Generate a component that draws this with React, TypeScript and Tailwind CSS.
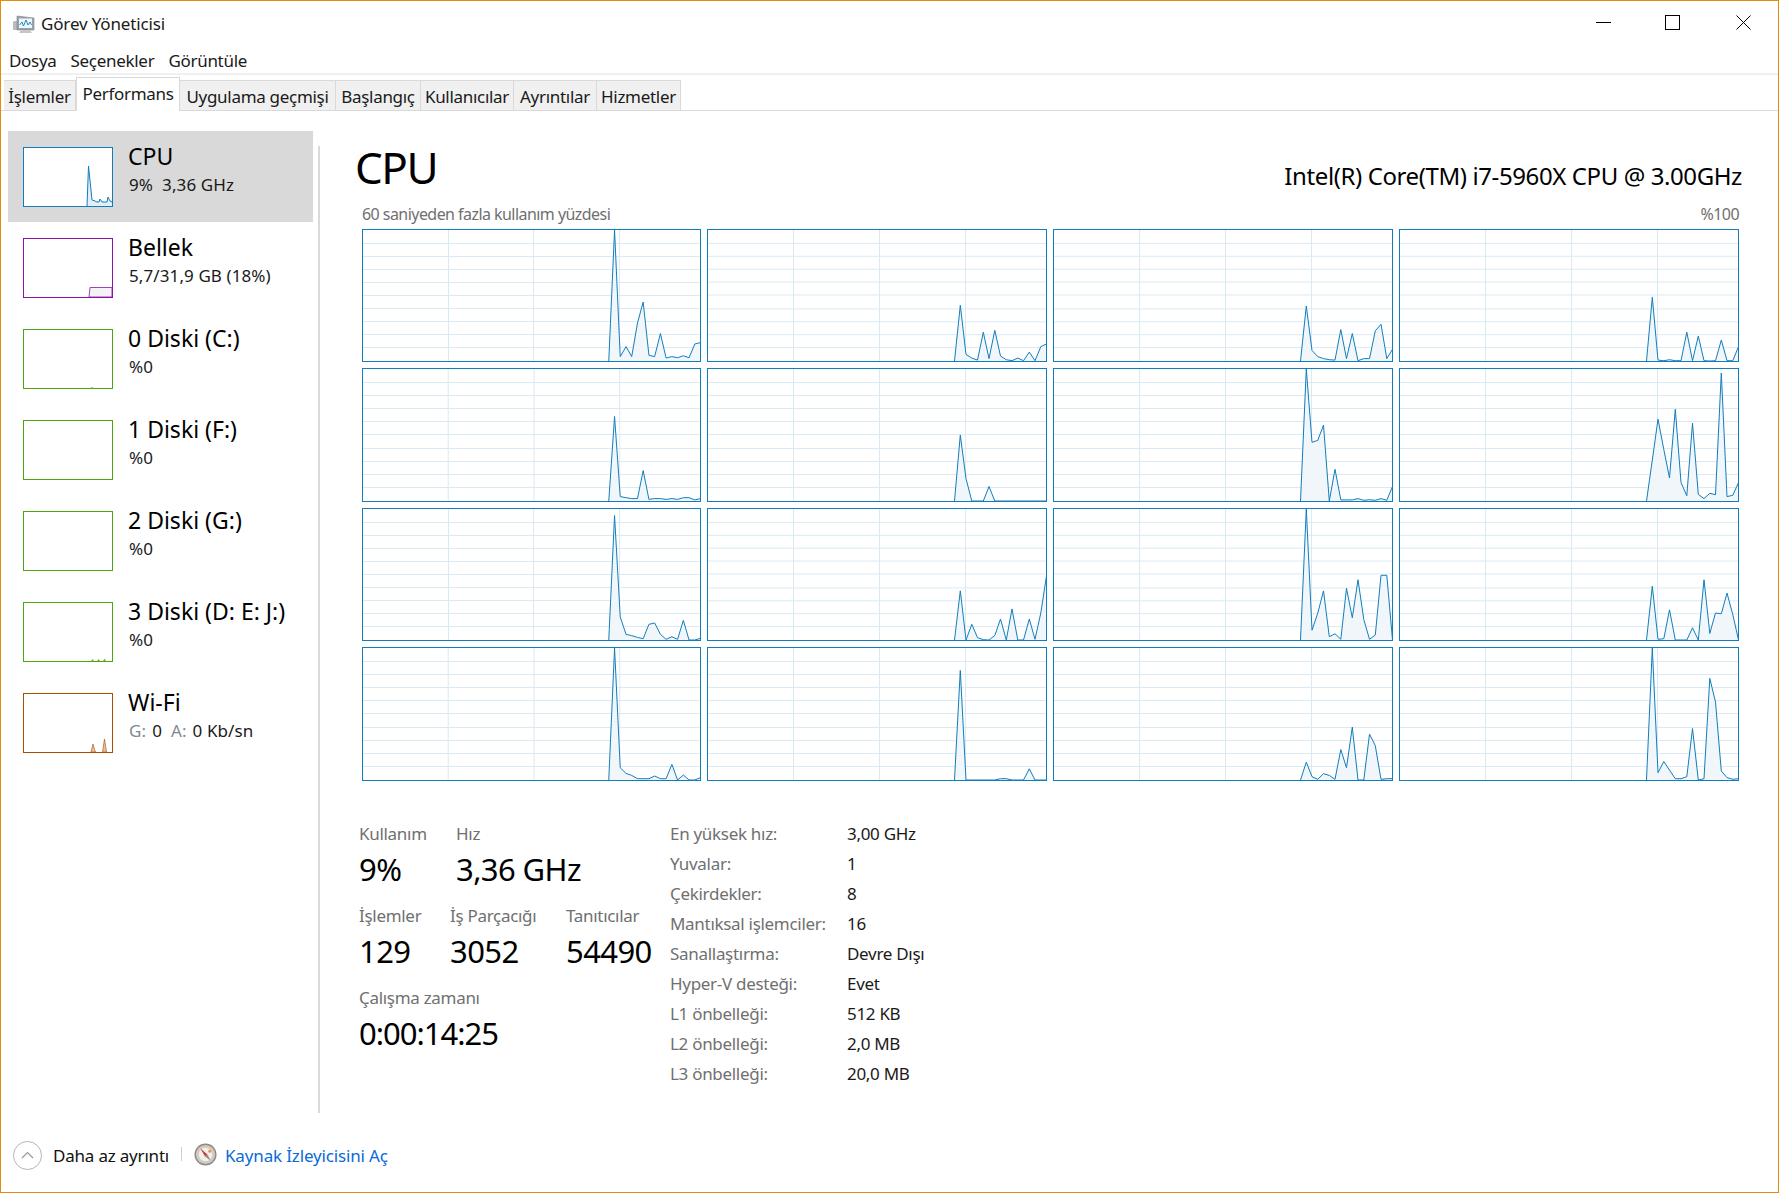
const series = [
  [0, 100, 3.3, 11, 3.3, 29, 45, 4.3, 3.3, 21, 2.3, 3.3, 2.5, 4, 2.5, 13, 14],
  [0, 42.5, 5, 2.3, 0.7, 22, 1.8, 23.4, 3.8, 1, 0.2, 2.3, 0.2, 6.8, 0.2, 11, 13],
  [0, 42, 8, 3.3, 1.8, 1, 0.7, 24, 1.8, 21, 0.2, 1.8, 1.8, 23, 28, 1.8, 9],
  [0, 48.6, 0.7, 0.2, 1, 0.2, 0.2, 22, 0.2, 19, 0.2, 0, 0.2, 16, 0.2, 0.2, 11],
  [0, 64, 3.3, 2.5, 1.8, 1.8, 23, 1.2, 1.8, 1.8, 1.2, 1.8, 1.2, 2.5, 2.5, 0.8, 1.8],
  [0, 50, 17, 0, 0, 0, 11, 0, 0, 0, 0, 0, 0, 0, 0, 0, 0],
  [0, 100, 44.5, 46, 57.5, 0, 24, 0.8, 0.8, 0.8, 1.8, 0.5, 1, 0.5, 1.8, 0.5, 11],
  [0, 31, 62, 39, 17.5, 69.5, 14, 4, 59, 5, 1.8, 5.8, 4.8, 97, 3.3, 4.3, 14],
  [0, 95, 17.6, 4.3, 3.3, 2, 1, 12, 13, 4.3, 0.5, 2.5, 0.5, 15, 0, 0, 1.3],
  [0, 37.5, 0, 12, 1.8, 0.2, 0, 3.5, 16, 0, 23.7, 0, 0, 16, 0.5, 20.6, 49],
  [0, 100, 7.5, 20.6, 37.5, 2.5, 4.8, 0.5, 39.5, 17, 46, 15.6, 0.5, 3.8, 49.4, 49.4, 0],
  [0, 41, 0.5, 1, 23, 0, 0, 0, 9.3, 0, 46, 5, 20.6, 20, 35.8, 19.4, 0],
  [0, 100, 9.3, 5, 3.5, 1, 1, 1, 3, 1, 1, 11.8, 0, 3.8, 0, 0, 1.8],
  [0, 83, 0, 0, 0, 0, 0, 0, 1, 1, 0, 0, 0, 8.5, 0, 0, 0],
  [0, 13.5, 2.5, 0.5, 4.8, 3.5, 0.5, 23, 9.3, 40, 0, 0, 34.8, 26, 0.5, 1, 1],
  [0, 100, 5.5, 14, 7.5, 1, 1, 2.5, 39, 0, 1, 77, 59, 6.8, 1.8, 0.5, 1],
];

const hLines = [13, 26, 39, 52, 65, 79, 92, 105, 118];
const vLines = [85.5, 171.5, 257.5];

function CoreChart({ values }: { values: number[] }) {
  const pts = values
    .map((v, i) => `${(338.5 - (16 - i) * 5.75).toFixed(1)},${(132 - v * 1.32).toFixed(1)}`)
    .join(" ");
  return (
    <div className="border border-[#117dbb] bg-white min-w-0 min-h-0">
      <svg viewBox="0 0 338 132" preserveAspectRatio="none" className="block w-full h-full">
        {hLines.map((y) => (
          <line key={y} x1="0" x2="338" y1={y + 0.5} y2={y + 0.5} stroke="#d9eaf4" shapeRendering="crispEdges" />
        ))}
        {vLines.map((x) => (
          <line key={x} y1="0" y2="132" x1={x} x2={x} stroke="#d9eaf4" shapeRendering="crispEdges" />
        ))}
        <polygon points={`${pts} 338.5,132`} fill="#f1f6fa" />
        <polyline points={pts} fill="none" stroke="#117dbb" strokeWidth="1" />
      </svg>
    </div>
  );
}

function Thumb({ color, children }: { color: string; children?: React.ReactNode }) {
  return (
    <svg width="90" height="60" viewBox="0 0 90 60" className="block shrink-0">
      <rect x="0.5" y="0.5" width="89" height="59" fill="#fff" stroke={color} />
      {children}
    </svg>
  );
}

const tabs = [
  { label: "İşlemler", w: "w-[72px]" },
  { label: "Performans", w: "w-[104px]", active: true },
  { label: "Uygulama geçmişi", w: "w-[156px]" },
  { label: "Başlangıç", w: "w-[85px]" },
  { label: "Kullanıcılar", w: "w-[93px]" },
  { label: "Ayrıntılar", w: "w-[83px]" },
  { label: "Hizmetler", w: "w-[84px]" },
];

const specs = [
  ["En yüksek hız:", "3,00 GHz"],
  ["Yuvalar:", "1"],
  ["Çekirdekler:", "8"],
  ["Mantıksal işlemciler:", "16"],
  ["Sanallaştırma:", "Devre Dışı"],
  ["Hyper-V desteği:", "Evet"],
  ["L1 önbelleği:", "512 KB"],
  ["L2 önbelleği:", "2,0 MB"],
  ["L3 önbelleği:", "20,0 MB"],
];

function SideItem({
  name,
  sub,
  thumb,
  selected,
}: {
  name: string;
  sub: React.ReactNode;
  thumb: React.ReactNode;
  selected?: boolean;
}) {
  return (
    <div className={`w-[305px] h-[91px] flex pl-[15px] pt-[16px] ${selected ? "bg-[#d9d9d9]" : ""}`}>
      {thumb}
      <div className="ml-[15px] -mt-[8px]">
        <div className="text-[23px] leading-[34px] text-black whitespace-nowrap">{name}</div>
        <div className="mt-px text-[17px] leading-[22px] tracking-[0.1px] text-[#1a1a1a] ml-[1px] whitespace-nowrap">{sub}</div>
      </div>
    </div>
  );
}

function Stat({ label, value, w, tight }: { label: string; value: string; w: string; tight?: boolean }) {
  return (
    <div className={w}>
      <div className="h-[24px] leading-[26px] text-[17px] tracking-[-0.3px] text-[#707070] whitespace-nowrap">{label}</div>
      <div className={`h-[48px] leading-[48px] text-[31px] text-black whitespace-nowrap ${tight ? "tracking-[-1px]" : "tracking-[-0.6px]"}`}>{value}</div>
    </div>
  );
}

export default function App() {
  return (
    <div className="w-[1779px] h-[1193px] bg-white border border-[#e38b0f] flex flex-col overflow-hidden font-['Noto_Sans','Open_Sans',sans-serif]">
      {/* title bar */}
      <div className="h-[46px] flex shrink-0 pl-[12px]">
        <svg width="22" height="18" viewBox="0 0 22 18" className="mt-[14px]">
          <rect x="0" y="6" width="5" height="9" rx="1" fill="#b9bdbf" />
          <path d="M4 1 L21 3 V15 L4 15 Z" fill="#9aa3a8" stroke="#7d8589" strokeWidth="0.6" />
          <rect x="6" y="3.5" width="13" height="9.5" fill="#eef6fb" />
          <polyline points="6.5,10 9,7 10.5,11 13,5 15,10 17,7 18.5,10" fill="none" stroke="#2a86c8" strokeWidth="1" />
          <path d="M8 15 H17 L19 18 H6 Z" fill="#c4c8ca" />
        </svg>
        <span className="ml-[6px] text-[17px] leading-[46px] tracking-[-0.15px] text-[#1a1a1a]">Görev Yöneticisi</span>
        <div className="ml-auto flex gap-[54px] pr-[27px] pt-[14px]">
          <svg width="15" height="15" viewBox="0 0 15 15">
            <line x1="0" x2="15" y1="7.5" y2="7.5" stroke="#000" />
          </svg>
          <svg width="15" height="15" viewBox="0 0 15 15" className="mr-[2px]">
            <rect x="0.5" y="0.5" width="14" height="14" fill="none" stroke="#000" />
          </svg>
          <svg width="15" height="15" viewBox="0 0 15 15">
            <path d="M0.5 0.5 L14.5 14.5 M14.5 0.5 L0.5 14.5" stroke="#000" strokeWidth="1" />
          </svg>
        </div>
      </div>

      {/* menu */}
      <div className="h-[28px] shrink-0 flex gap-[14px] pl-[8px] border-b-2 border-[#f0f0f0] text-[17px] leading-[27px] tracking-[-0.3px] text-[#1a1a1a]">
        <span>Dosya</span>
        <span>Seçenekler</span>
        <span>Görüntüle</span>
      </div>

      {/* tabs */}
      <div className="h-[36px] shrink-0 flex items-end pl-[3px] border-b border-[#d9d9d9] text-[17px] tracking-[-0.3px] text-[#1a1a1a]">
        {tabs.map((t) =>
          t.active ? (
            <div key={t.label} className={`${t.w} h-[34px] -mb-px bg-white border border-b-0 border-[#d9d9d9] text-center leading-[31px] whitespace-nowrap`}>
              {t.label}
            </div>
          ) : (
            <div key={t.label} className={`${t.w} h-[30px] bg-[#f0f0f0] border border-b-0 border-l-0 border-[#d9d9d9] text-center leading-[31px] whitespace-nowrap`}>
              {t.label}
            </div>
          ),
        )}
      </div>

      {/* body */}
      <div className="flex-1 flex min-h-0">
        <div className="w-[317px] shrink-0 pl-[7px] pt-[20px]">
          <SideItem
            selected
            name="CPU"
            sub={"9%\u00a0\u00a03,36 GHz"}
            thumb={
              <Thumb color="#117dbb">
                <polygon points="64,59 65.5,19 69,53 72,54 74,55 76,55 77,52 79,55 84,55 85,50 87,54 89,55 89,59" fill="#e3eff7" />
                <polyline points="64,59 65.5,19 69,53 72,54 74,55 76,55 77,52 79,55 84,55 85,50 87,54 89,55" fill="none" stroke="#117dbb" />
              </Thumb>
            }
          />
          <SideItem
            name="Bellek"
            sub="5,7/31,9 GB (18%)"
            thumb={
              <Thumb color="#8b12ae">
                <path d="M66 59 L67 49.5 H89 V59 Z" fill="#f4f2f4" stroke="#8b12ae" strokeWidth="0.8" />
              </Thumb>
            }
          />
          <SideItem
            name="0 Diski (C:)"
            sub="%0"
            thumb={
              <Thumb color="#4da60c">
                <path d="M68 59 L69 58 L70 59 Z" fill="#4da60c" />
              </Thumb>
            }
          />
          <SideItem name="1 Diski (F:)" sub="%0" thumb={<Thumb color="#4da60c" />} />
          <SideItem name="2 Diski (G:)" sub="%0" thumb={<Thumb color="#4da60c" />} />
          <SideItem
            name="3 Diski (D: E: J:)"
            sub="%0"
            thumb={
              <Thumb color="#4da60c">
                <path d="M68 59 L69.5 57 L71 59 Z M74 59 L75.5 57 L77 59 Z M80 59 L81.5 56.5 L83 59 Z" fill="#6fb83a" />
              </Thumb>
            }
          />
          <SideItem
            name="Wi-Fi"
            sub={
              <>
                <span className="text-[#7f8a94]">G:</span>
                <span className="ml-[6px]">0</span>
                <span className="text-[#7f8a94] ml-[9px]">A:</span>
                <span className="ml-[6px]">0 Kb/sn</span>
              </>
            }
            thumb={
              <Thumb color="#a74f01">
                <path d="M68 59 L70 51 L71 55 L72.5 59 Z M79.5 59 L81.5 46 L83.5 59 Z" fill="#e6c3a3" stroke="#a74f01" strokeWidth="0.6" />
              </Thumb>
            }
          />
        </div>

        <div className="w-[2px] shrink-0 bg-[#d9d9d9] mt-[35px] mb-[15px]" />

        <div className="flex-1 min-w-0 pl-[42px] pr-[39px]">
          <div className="h-[95px] flex justify-between items-end">
            <div className="-ml-[7px] text-[44px] leading-[77px] tracking-[-1.5px] text-black">CPU</div>
            <div className="text-[24px] leading-[60px] tracking-[-0.4px] text-black -mr-[3px]">
              Intel(R) Core(TM) i7-5960X CPU @ 3.00GHz
            </div>
          </div>
          <div className="h-[23px] flex justify-between text-[16px] leading-[16px] tracking-[-0.55px] text-[#707070]">
            <span>60 saniyeden fazla kullanım yüzdesi</span>
            <span>%100</span>
          </div>

          <div className="grid grid-cols-[339px_340px_340px_340px] grid-rows-[133px_134px_133px_134px] gap-[6px]">
            {series.map((s, i) => (
              <CoreChart key={i} values={s} />
            ))}
          </div>

          <div className="mt-[38px] flex items-start">
            <div className="w-[311px] -ml-[3px] pt-[2px] flex flex-col gap-[10px]">
              <div className="flex">
                <Stat w="w-[97px]" label="Kullanım" value="9%" />
                <Stat w="w-[150px]" label="Hız" value="3,36 GHz" />
              </div>
              <div className="flex">
                <Stat w="w-[91px]" label="İşlemler" value="129" />
                <Stat w="w-[116px]" label="İş Parçacığı" value="3052" />
                <Stat w="w-[90px]" label="Tanıtıcılar" value="54490" />
              </div>
              <Stat w="w-[200px]" label="Çalışma zamanı" value="0:00:14:25" tight />
            </div>
            <div className="grid grid-cols-[177px_auto] auto-rows-[30px] text-[17px] leading-[30px] tracking-[-0.3px]">
              {specs.map(([k, v]) => (
                <div key={k} className="contents">
                  <div className="text-[#707070] whitespace-nowrap">{k}</div>
                  <div className="text-[#1a1a1a] whitespace-nowrap">{v}</div>
                </div>
              ))}
            </div>
          </div>
        </div>
      </div>

      {/* footer */}
      <div className="h-[64px] shrink-0 flex items-center pl-[12px] pb-[9px]">
        <svg width="29" height="29" viewBox="0 0 29 29">
          <circle cx="14.5" cy="14.5" r="14" fill="#fff" stroke="#b5b5b5" />
          <polyline points="9,17 14.5,11.5 20,17" fill="none" stroke="#9a9a9a" strokeWidth="1.2" />
        </svg>
        <span className="ml-[11px] text-[17px] tracking-[-0.2px] text-[#111]">Daha az ayrıntı</span>
        <div className="ml-[12px] w-px h-[14px] bg-[#cfcfcf] -mt-[4px]" />
        <svg width="23" height="23" viewBox="0 0 24 24" className="ml-[12px] -mt-[2px]">
          <circle cx="12" cy="12" r="11.5" fill="#8f8a85" />
          <circle cx="12" cy="12" r="10" fill="#cfcbc5" />
          <circle cx="12" cy="12" r="7" fill="#f3efe9" />
          <path d="M6.5 5.5 L14 12 L11.5 14 Z" fill="#cf3b32" />
          <path d="M14 12 L17.5 18.5 L11.5 14 Z" fill="#8c8c8c" />
          <circle cx="16.5" cy="8.5" r="1.6" fill="#e59a45" />
        </svg>
        <a className="ml-[8px] text-[17px] tracking-[-0.15px] text-[#0a6ad6]">Kaynak İzleyicisini Aç</a>
      </div>
    </div>
  );
}
